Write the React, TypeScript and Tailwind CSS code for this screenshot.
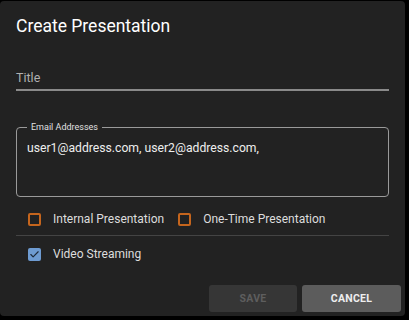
import { Check } from 'lucide-react'

const OrangeBox = () => (
  <span className="block h-[13px] w-[13px] rounded-[2px] border-2 border-[#c5651d]" />
)

const CheckedBox = () => (
  <span className="flex h-[13px] w-[13px] items-center justify-center rounded-[2px] bg-[#6e9bd1]">
    <Check size={11} strokeWidth={2.5} className="text-[#1d2a3a]" />
  </span>
)

export default function App() {
  return (
    <div className="h-[320px] w-[409px] bg-black pt-px font-['Roboto',sans-serif]">
      <div className="flex h-[315px] w-[405px] flex-col rounded-[4px] bg-[#222222]">
        <h1 className="px-4 pt-[13px] text-[17.5px] leading-[24px] text-white">Create Presentation</h1>

        <div className="mx-4 mt-[32px] border-b-2 border-[#8a8a8a] pb-[3px]">
          <span className="block text-[12.5px] leading-[16px] text-[#b0b0b0]">Title</span>
        </div>

        <fieldset className="mx-4 mt-[31px] h-[75px] rounded-[4px] border border-[#9a9a9a] px-[10px]">
          <legend className="px-[4px] text-[9px] leading-[10px] text-[#e0e0e0]">Email Addresses</legend>
          <p className="mt-[8px] text-[12.2px] leading-[16px] text-[#eeeeee]">
            user1@address.com, user2@address.com,
          </p>
        </fieldset>

        <div className="mx-4 flex items-center border-b border-[#444] pt-[14px] pb-[8px]">
          <label className="flex items-center gap-[12px] pl-[12px]">
            <OrangeBox />
            <span className="text-[12px] leading-[16px] text-[#dddddd]">Internal Presentation</span>
          </label>
          <label className="ml-[14px] flex items-center gap-[12px]">
            <OrangeBox />
            <span className="text-[12px] leading-[16px] text-[#dddddd]">One-Time Presentation</span>
          </label>
        </div>

        <label className="mx-4 flex items-center gap-[12px] pt-[10px] pl-[12px]">
          <CheckedBox />
          <span className="text-[12px] leading-[16px] text-[#dddddd]">Video Streaming</span>
        </label>

        <div className="mt-auto mb-[4px] flex justify-end gap-[5px] pr-[4px]">
          <button
            type="button"
            disabled
            className="h-[27px] w-[88px] rounded-[3px] bg-[#363636] text-[10.5px] font-bold tracking-wide text-[#5e5e5e]"
          >
            SAVE
          </button>
          <button
            type="button"
            className="h-[27px] w-[99px] rounded-[3px] bg-[#5c5c5c] text-[10.5px] font-bold tracking-wide text-[#eeeeee]"
          >
            CANCEL
          </button>
        </div>
      </div>
    </div>
  )
}
